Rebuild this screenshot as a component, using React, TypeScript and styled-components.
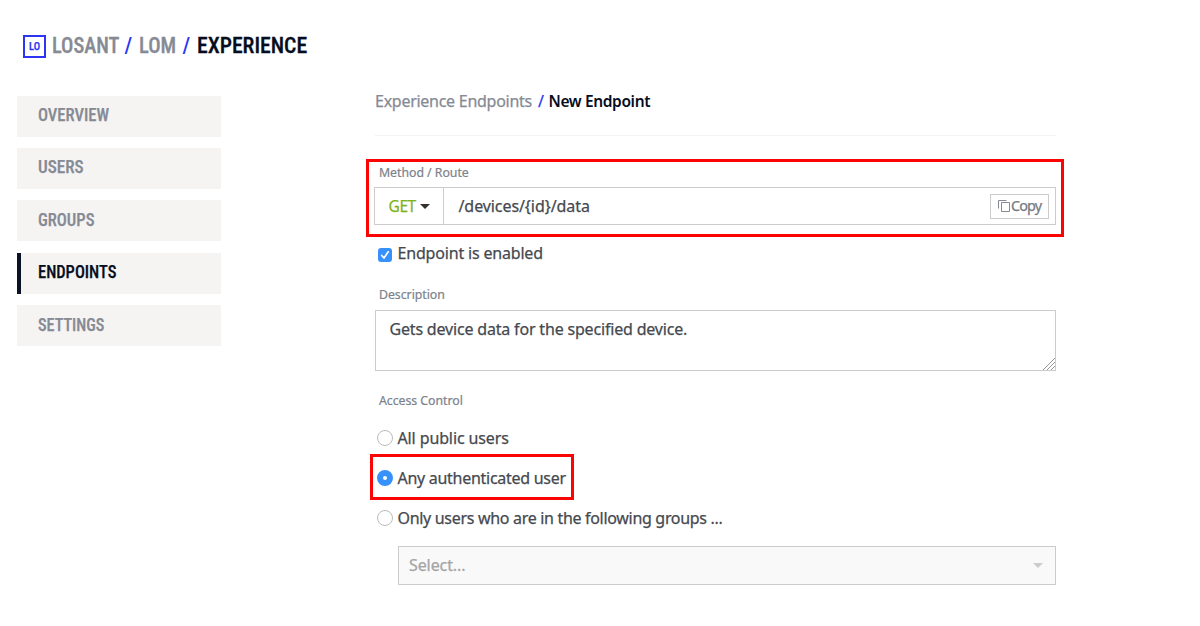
import React from "react";
import styled, { createGlobalStyle } from "styled-components";

const GlobalStyle = createGlobalStyle`
  *, *::before, *::after { box-sizing: border-box; }
  body {
    margin: 0;
    background: #fff;
    color: #45494f;
    font: 400 16px/24px "Noto Sans", "Open Sans", sans-serif;
    font-variant-ligatures: none;
    -webkit-text-stroke: 0.25px;
  }
`;

const Page = styled.div`
  height: 626px;
  padding: 35px 0 0 17px;
  overflow: hidden;
`;

const Header = styled.header`
  display: flex;
  align-items: flex-start;
  height: 23px;
  padding-left: 6px;
`;

const Logo = styled.div`
  width: 23px;
  height: 23px;
  border: 2px solid #2b35f3;
  color: #2b35f3;
  font: 500 10.5px/20px "Roboto Condensed", Roboto, sans-serif;
  text-align: center;
  margin-right: 5.5px;
`;

const Squeeze = styled.span<{ $scale: number }>`
  display: inline-block;
  white-space: nowrap;
  transform: scaleX(${(p) => p.$scale});
  transform-origin: left center;
`;

const Crumb = styled.div<{ $width: number; $current?: boolean }>`
  width: ${(p) => p.$width}px;
  color: ${(p) => (p.$current ? "#060d20" : "#868a94")};
  font: 500 22px/22px "Roboto Condensed", Roboto, sans-serif;
  -webkit-text-stroke: 0.3px;
`;

const CrumbSlash = styled(Crumb)`
  color: #2b35f3;
  -webkit-text-stroke: 0;
`;

const Columns = styled.div`
  display: flex;
  align-items: flex-start;
  padding-top: 31px;
`;

const Nav = styled.nav`
  display: flex;
  flex-direction: column;
  gap: 11.4px;
  width: 204px;
  margin: 6.5px 154px 0 0;
`;

const NavItem = styled.a<{ $active?: boolean }>`
  display: flex;
  align-items: center;
  height: 41px;
  padding: 0 0 2px ${(p) => (p.$active ? 17 : 20)}px;
  border-left: ${(p) => (p.$active ? "4px solid #0a1326" : "1px solid #f5f4f3")};
  background: #f5f4f3;
  color: ${(p) => (p.$active ? "#060d20" : "#868a94")};
  font: 500 18px/24px "Roboto Condensed", Roboto, sans-serif;
`;

const Main = styled.main`
  display: flex;
  flex-direction: column;
  width: 681px;
`;

const Title = styled.div`
  display: flex;
  height: 47px;
  border-bottom: 1px solid #f3f3f3;
  white-space: nowrap;
`;

const TitleLink = styled.span`
  width: 163px;
  color: #868a94;
  letter-spacing: -0.27px;
`;

const TitleSlash = styled.span`
  width: 10.5px;
  color: #2b35f3;
`;

const TitleCurrent = styled.span`
  color: #060d20;
  font-size: 15.5px;
  font-weight: 600;
  letter-spacing: -0.37px;
  -webkit-text-stroke: 0;
`;

const RouteHighlight = styled.section`
  width: 698px;
  height: 78px;
  margin: 23px 0 0 -9px;
  padding: 0 5px;
  border: 3px solid #fa0404;
`;

const Label = styled.div`
  height: 20px;
  padding: 1px 0 0 4px;
  color: #7c828b;
  font-size: 12.3px;
  line-height: 20px;
  letter-spacing: -0.03px;
  -webkit-text-stroke: 0.2px;
`;

const RouteLabel = styled(Label)`
  padding-left: 5px;
`;

const RouteGroup = styled.div`
  display: flex;
  align-items: center;
  width: 682px;
  height: 38px;
  margin-top: 5px;
  padding-right: 6px;
  border: 1px solid #ccc;
`;

const Method = styled.div`
  display: flex;
  align-items: center;
  gap: 4px;
  width: 69px;
  height: 36px;
  padding-left: 13.5px;
  border-right: 1px solid #ccc;
  color: #7fb21c;
  font-size: 15.5px;
  letter-spacing: -0.4px;
`;

const Caret = styled.i<{ $color: string }>`
  border: 5px solid transparent;
  border-top-color: ${(p) => p.$color};
  border-bottom: 0;
`;

const Route = styled.div`
  flex: 1;
  padding: 0 0 1px 14.5px;
  letter-spacing: -0.08px;
`;

const CopyButton = styled.div`
  display: flex;
  align-items: center;
  gap: 0;
  width: 59px;
  height: 25px;
  padding-left: 7px;
  border: 1px solid #ccc;
  color: #757a83;
  font-size: 14.4px;
  letter-spacing: -0.9px;
`;

const Choice = styled.label<{ $spacing?: number }>`
  display: flex;
  align-items: center;
  gap: 4.5px;
  height: 24px;
  padding-left: 2px;
  white-space: nowrap;
  letter-spacing: ${(p) => p.$spacing ?? 0}px;
`;

const EnabledChoice = styled(Choice)`
  margin: 4px 0 19px;
  padding-left: 3px;
`;

const CheckBox = styled.span`
  display: flex;
  width: 14px;
  height: 14px;
  margin: 3px 1px 0 0;
  border-radius: 3px;
  background: #3691fb;
`;

const Radio = styled.span<{ $checked?: boolean }>`
  width: 16px;
  height: 16px;
  border: ${(p) => (p.$checked ? "6px solid #3691fb" : "1px solid #bbb")};
  border-radius: 50%;
  background: #fff;
`;

const TextArea = styled.div`
  display: flex;
  align-items: flex-start;
  justify-content: space-between;
  height: 61px;
  margin: 6px 0 19px;
  padding: 6px 0 0 13.5px;
  border: 1px solid #ccc;
  letter-spacing: -0.18px;
`;

const ResizeGrip = styled.svg`
  align-self: flex-end;
`;

const ChoiceList = styled.div`
  display: flex;
  flex-direction: column;
  padding-top: 16px;
`;

const ChoiceHighlight = styled.div`
  width: 204px;
  height: 46px;
  margin: 4px 0 6px -5px;
  padding: 9px 0 0 2px;
  border: 3px solid #fa0404;
`;

const Select = styled.div`
  display: flex;
  align-items: center;
  justify-content: space-between;
  height: 39px;
  margin: 16px 0 0 23px;
  padding: 0 12px 1px 10px;
  border: 1px solid #ccc;
  background: #f9f9f9;
  color: #a5a5a5;
  letter-spacing: -0.1px;
`;

const navItems = [
  { label: "OVERVIEW", scale: 0.925 },
  { label: "USERS", scale: 0.95 },
  { label: "GROUPS", scale: 0.925 },
  { label: "ENDPOINTS", scale: 0.915, active: true },
  { label: "SETTINGS", scale: 0.9 },
];

export default function App() {
  return (
    <Page>
      <GlobalStyle />
      <Header>
        <Logo>LO</Logo>
        <Crumb $width={73}><Squeeze $scale={0.93}>LOSANT</Squeeze></Crumb>
        <CrumbSlash $width={14}>/</CrumbSlash>
        <Crumb $width={44}><Squeeze $scale={0.935}>LOM</Squeeze></Crumb>
        <CrumbSlash $width={14.5}>/</CrumbSlash>
        <Crumb $width={112} $current><Squeeze $scale={0.985}>EXPERIENCE</Squeeze></Crumb>
      </Header>
      <Columns>
        <Nav>
          {navItems.map((item) => (
            <NavItem key={item.label} $active={item.active}>
              <Squeeze $scale={item.scale}>{item.label}</Squeeze>
            </NavItem>
          ))}
        </Nav>
        <Main>
          <Title>
            <TitleLink>Experience Endpoints</TitleLink>
            <TitleSlash>/</TitleSlash>
            <TitleCurrent>New Endpoint</TitleCurrent>
          </Title>
          <RouteHighlight>
            <RouteLabel>Method / Route</RouteLabel>
            <RouteGroup>
              <Method>GET<Caret $color="#33302f" /></Method>
              <Route>/devices/&#123;id&#125;/data</Route>
              <CopyButton>
                <svg width="13" height="14" viewBox="0 0 13 14" fill="none" stroke="#858a92">
                  <path d="M.5 9.5V1.5H8.5M3.5 3.5h8v9h-8z" />
                </svg>
                Copy
              </CopyButton>
            </RouteGroup>
          </RouteHighlight>
          <EnabledChoice $spacing={-0.18}>
            <CheckBox>
              <svg width="14" height="14" viewBox="0 0 14 14" fill="none" stroke="#fff" strokeWidth="1.7" strokeLinecap="round">
                <path d="M3.7 7.5L6 10l4.2-6.2" />
              </svg>
            </CheckBox>
            Endpoint is enabled
          </EnabledChoice>
          <Label>Description</Label>
          <TextArea>
            Gets device data for the specified device.
            <ResizeGrip width="12" height="12" viewBox="0 0 12 12" stroke="#999">
              <path d="M0 12L12 0M4 12l8-8M8 12l4-4" />
            </ResizeGrip>
          </TextArea>
          <Label>Access Control</Label>
          <ChoiceList>
            <Choice $spacing={-0.12}><Radio />All public users</Choice>
            <ChoiceHighlight>
              <Choice as="div" $spacing={-0.28}><Radio $checked />Any authenticated user</Choice>
            </ChoiceHighlight>
            <Choice $spacing={-0.31}><Radio />Only users who are in the following groups ...</Choice>
          </ChoiceList>
          <Select>Select...<Caret $color="#ccc" /></Select>
        </Main>
      </Columns>
    </Page>
  );
}
